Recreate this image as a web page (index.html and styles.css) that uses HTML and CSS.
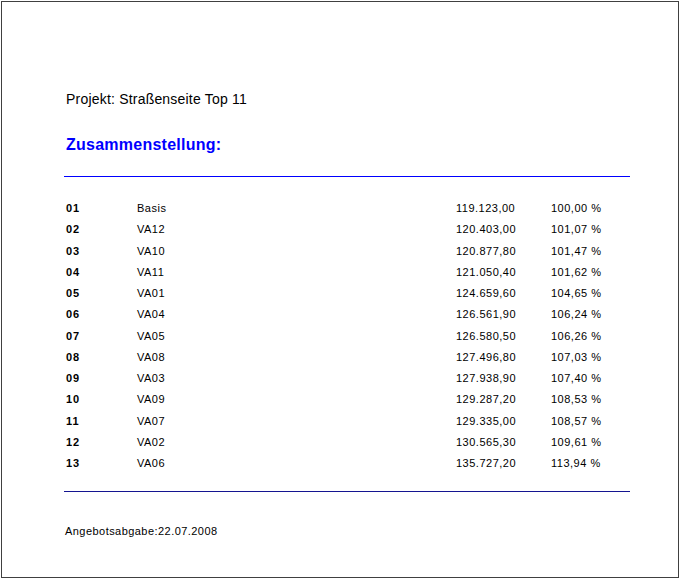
FILE: index.html
```html
<!DOCTYPE html>
<html lang="de">
<head>
<meta charset="utf-8">
<title>Zusammenstellung</title>
<link rel="stylesheet" href="styles.css">
</head>
<body>
<div class="page">
  <div class="project">Projekt: Straßenseite Top 11</div>
  <h1 class="title">Zusammenstellung:</h1>
  <hr class="rule rule-top">
  <div class="table">
    <div class="row"><span class="nr">01</span><span>Basis</span><span>119.123,00</span><span>100,00 %</span></div>
    <div class="row"><span class="nr">02</span><span>VA12</span><span>120.403,00</span><span>101,07 %</span></div>
    <div class="row"><span class="nr">03</span><span>VA10</span><span>120.877,80</span><span>101,47 %</span></div>
    <div class="row"><span class="nr">04</span><span>VA11</span><span>121.050,40</span><span>101,62 %</span></div>
    <div class="row"><span class="nr">05</span><span>VA01</span><span>124.659,60</span><span>104,65 %</span></div>
    <div class="row"><span class="nr">06</span><span>VA04</span><span>126.561,90</span><span>106,24 %</span></div>
    <div class="row"><span class="nr">07</span><span>VA05</span><span>126.580,50</span><span>106,26 %</span></div>
    <div class="row"><span class="nr">08</span><span>VA08</span><span>127.496,80</span><span>107,03 %</span></div>
    <div class="row"><span class="nr">09</span><span>VA03</span><span>127.938,90</span><span>107,40 %</span></div>
    <div class="row"><span class="nr">10</span><span>VA09</span><span>129.287,20</span><span>108,53 %</span></div>
    <div class="row"><span class="nr">11</span><span>VA07</span><span>129.335,00</span><span>108,57 %</span></div>
    <div class="row"><span class="nr">12</span><span>VA02</span><span>130.565,30</span><span>109,61 %</span></div>
    <div class="row"><span class="nr">13</span><span>VA06</span><span>135.727,20</span><span>113,94 %</span></div>
  </div>
  <hr class="rule rule-bottom">
  <div class="footer">Angebotsabgabe:22.07.2008</div>
</div>
</body>
</html>
```

FILE: styles.css
```css
html, body {
  margin: 0;
  padding: 0;
  background: #ffffff;
}

body {
  font-family: "Liberation Sans", Arial, sans-serif;
  color: #000000;
}

.page {
  box-sizing: border-box;
  width: 678px;
  height: 577px;
  margin: 1px;
  border: 1px solid #404040;
  padding: 89px 48px 0 62px;
}

.project {
  padding-left: 2px;
  font-size: 14px;
  line-height: 17px;
  letter-spacing: 0.2px;
}

.title {
  margin: 27px 0 0 0;
  padding-left: 2px;
  font-size: 16px;
  line-height: 20px;
  font-weight: bold;
  letter-spacing: 0.25px;
  color: #0000ff;
}

.rule {
  margin: 0;
  border: 0;
  height: 1px;
  width: 566px;
}

.rule-top {
  margin-top: 21px;
  background: #0000ff;
}

.rule-bottom {
  margin-top: 17px;
  background: #141490;
}

.table {
  margin-top: 21px;
  padding-left: 2px;
}

.row {
  display: grid;
  grid-template-columns: 71px 319px 95px auto;
  height: 21.25px;
  font-size: 11px;
  line-height: 21.25px;
  letter-spacing: 0.5px;
}

.nr {
  font-weight: bold;
  letter-spacing: 1px;
}

.footer {
  margin-top: 32px;
  padding-left: 1px;
  font-size: 11px;
  line-height: 14px;
  letter-spacing: 0.45px;
}
```
